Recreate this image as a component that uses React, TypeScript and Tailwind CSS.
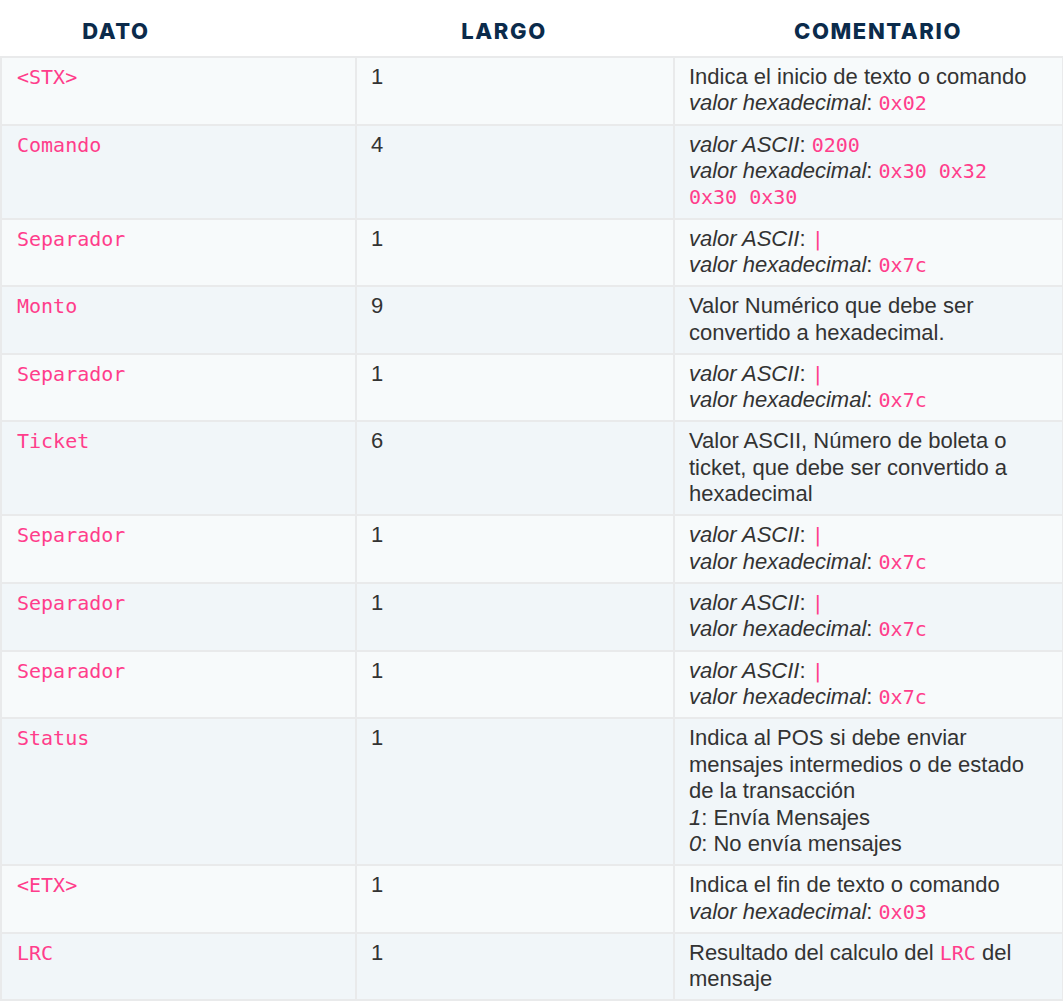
import { ReactNode } from "react";

const C = ({ children }: { children: ReactNode }) => (
  <code className="font-['DejaVu_Sans_Mono',monospace] text-[20px] text-[#ff3d8b]">{children}</code>
);

const I = ({ children }: { children: ReactNode }) => <em className="italic">{children}</em>;

const Hex = ({ v }: { v: ReactNode }) => (
  <>
    <I>valor hexadecimal</I>: <C>{v}</C>
  </>
);

const Sep = () => (
  <>
    <I>valor ASCII</I>: <C>|</C>
    <br />
    <Hex v="0x7c" />
  </>
);

interface Row {
  dato: string;
  largo: string;
  comentario: ReactNode;
}

const rows: Row[] = [
  {
    dato: "<STX>",
    largo: "1",
    comentario: (
      <>
        Indica el inicio de texto o comando
        <br />
        <Hex v="0x02" />
      </>
    ),
  },
  {
    dato: "Comando",
    largo: "4",
    comentario: (
      <>
        <I>valor ASCII</I>: <C>0200</C>
        <br />
        <Hex
          v={
            <>
              0x30 0x32
              <br />
              0x30 0x30
            </>
          }
        />
      </>
    ),
  },
  { dato: "Separador", largo: "1", comentario: <Sep /> },
  { dato: "Monto", largo: "9", comentario: "Valor Numérico que debe ser convertido a hexadecimal." },
  { dato: "Separador", largo: "1", comentario: <Sep /> },
  {
    dato: "Ticket",
    largo: "6",
    comentario: "Valor ASCII, Número de boleta o ticket, que debe ser convertido a hexadecimal",
  },
  { dato: "Separador", largo: "1", comentario: <Sep /> },
  { dato: "Separador", largo: "1", comentario: <Sep /> },
  { dato: "Separador", largo: "1", comentario: <Sep /> },
  {
    dato: "Status",
    largo: "1",
    comentario: (
      <>
        Indica al POS si debe enviar mensajes intermedios o de estado de la transacción
        <br />
        <I>1</I>: Envía Mensajes
        <br />
        <I>0</I>: No envía mensajes
      </>
    ),
  },
  {
    dato: "<ETX>",
    largo: "1",
    comentario: (
      <>
        Indica el fin de texto o comando
        <br />
        <Hex v="0x03" />
      </>
    ),
  },
  {
    dato: "LRC",
    largo: "1",
    comentario: (
      <>
        Resultado del calculo del <C>LRC</C> del mensaje
      </>
    ),
  },
];

export default function App() {
  return (
    <div className="w-[1063px] bg-white font-['Liberation_Sans',Arial,sans-serif] text-[22px] leading-[26.4px] text-[#333333]">
      <div className="grid grid-cols-[232px_544px_204px] h-[56px] pt-[6px] items-center font-['Inter',sans-serif] font-extrabold text-[22px] tracking-[1.6px] text-[#0b2b4b] text-center">
        <div>DATO</div>
        <div>LARGO</div>
        <div>COMENTARIO</div>
      </div>
      <table className="w-[1062px] table-fixed border-collapse">
        <colgroup>
          <col className="w-[355px]" />
          <col className="w-[318px]" />
          <col className="w-[389px]" />
        </colgroup>
        <tbody>
          {rows.map((r, i) => (
            <tr key={i} className={i % 2 === 0 ? "bg-[#f7fafb]" : "bg-[#f1f6f9]"}>
              <td className="border-2 border-[#e9eaeb] align-top px-[15px] pt-[6px] pb-[6.8px]">
                <C>{r.dato}</C>
              </td>
              <td className="border-2 border-[#e9eaeb] align-top px-[14px] pt-[6px] pb-[6.8px]">{r.largo}</td>
              <td className="border-2 border-[#e9eaeb] align-top px-[14px] pt-[6px] pb-[6.8px]">{r.comentario}</td>
            </tr>
          ))}
        </tbody>
      </table>
    </div>
  );
}
